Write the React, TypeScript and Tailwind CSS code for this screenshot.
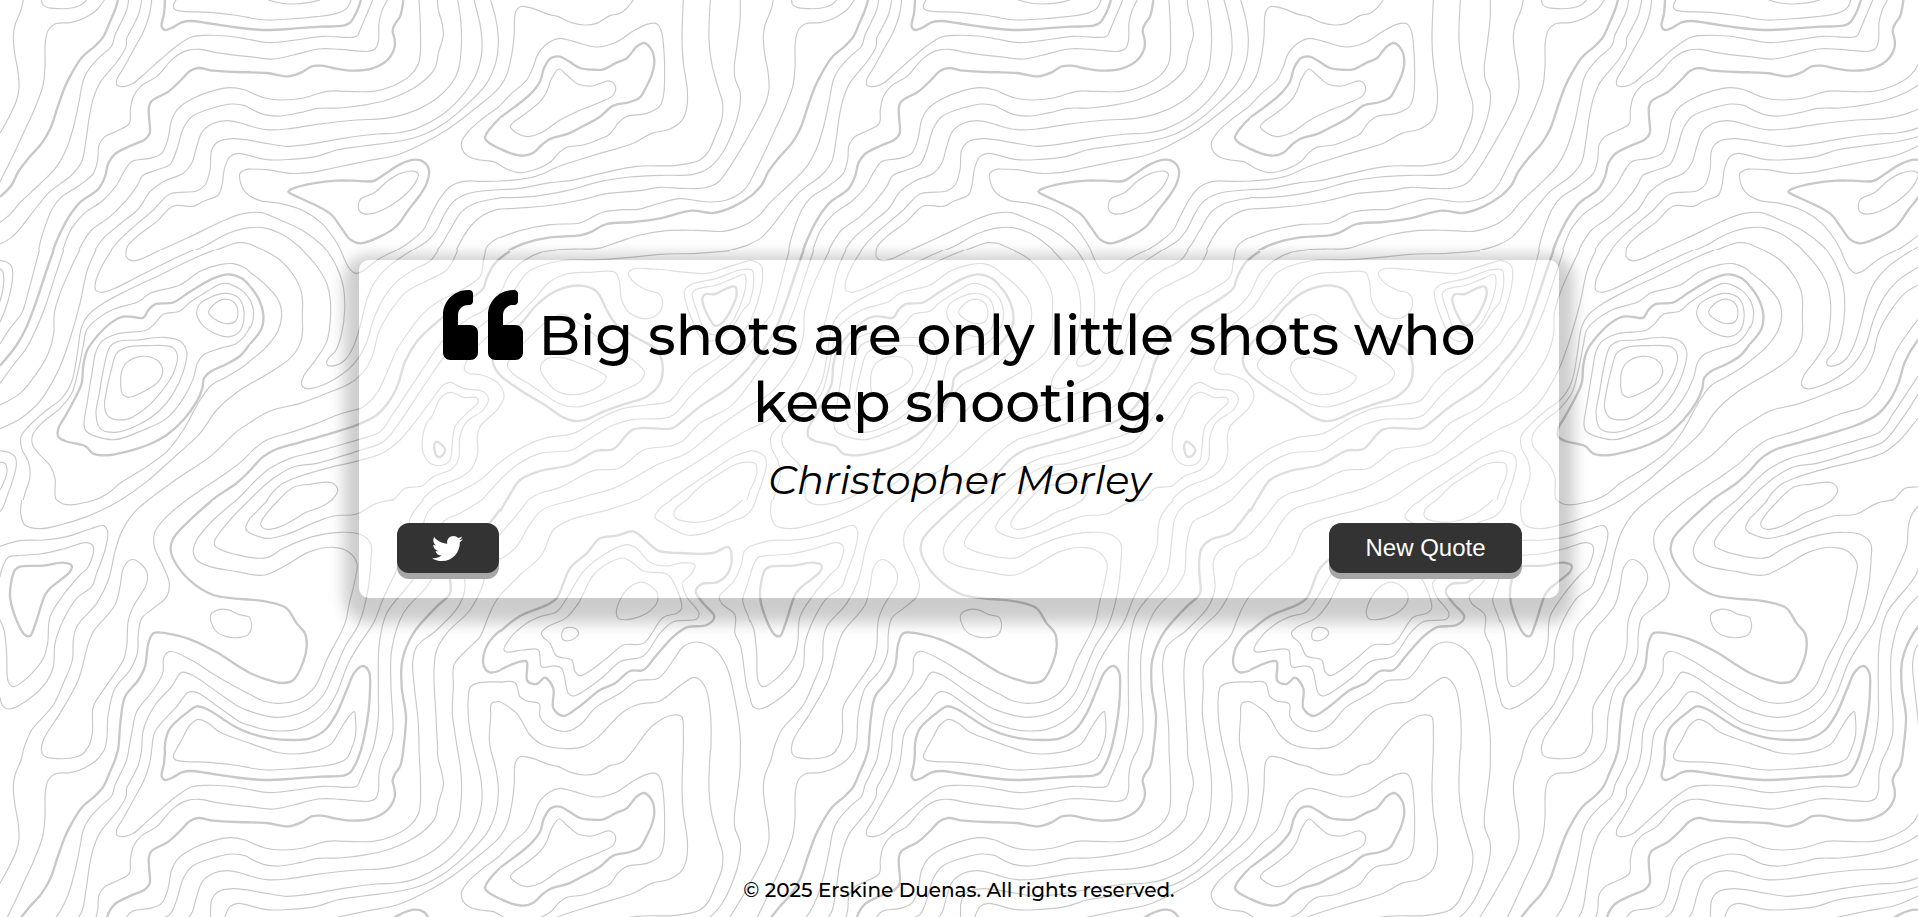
import React from "react";
import { FaQuoteLeft, FaTwitter } from "react-icons/fa";

type Cell = { x: number; y: number; w?: number; thin: string[]; thick: string[] };

// Contour lines of the repeating 750px tile. Points are in thirds of a pixel,
// relative to the cell's corner; a trailing "z" closes the contour.
const CELLS: Cell[] = [
  {
    x: 0, y: 0,
    thin: [
      "70,0 63,30 45,75 40,110 44,160 54,215 57,265 50,300 30,345 0,400",
      "125,0 127,12 140,22 175,26 215,24 243,15 260,0",
      "313,0 290,30 255,53 215,67 165,72 145,90 136,125 135,200 128,260 100,335 70,400 40,465 0,545",
      "386,0 380,30 362,70 345,105 335,138 300,170 265,210 250,240 238,300 222,375 200,445 170,500 120,552 60,608 30,643 0,667",
      "425,0 415,45 390,95 380,115 378,140 355,180 300,248 280,295 268,350 258,420 245,485 215,525 150,575 115,615 65,680 35,712 0,732",
      "455,0 448,45 430,95 400,150 370,205 350,240 352,257 375,259 400,250 435,220 480,180 530,138 575,111 620,106 680,108 730,115 750,119 780,125",
      "780,173 750,170 710,166 650,158 600,148 560,152 520,175 470,230 425,257 400,290 391,330 388,370 350,393 315,410 297,435 293,480 280,520 240,555 180,595 155,630 135,680 120,730 112,780",
      "528,0 520,20 527,30 550,34 630,37 700,45 750,53 780,58",
      "780,288 750,276 735,270 690,263 640,272 580,295 535,325 515,360 503,420 485,460 450,475 395,485 372,515 350,555 310,600 250,643 215,685 195,730 180,780",
      "780,341 750,325 735,317 695,312 645,322 575,350 550,385 530,450 510,493 470,510 428,527 410,560 375,605 330,650 275,690 250,725 222,780",
      "780,386 750,378 725,370 680,362 640,370 607,395 590,440 575,490 550,520 490,545 450,575 415,627 360,672 310,715 285,750 270,780",
      "780,426 750,421 735,419 700,416 655,425 635,450 630,510 615,555 590,573 510,582 460,630 390,690 345,735 315,780",
      "780,476 750,467 715,460 690,470 675,500 665,560 655,585 610,604 580,619 520,618 470,665 410,710 382,740 378,762 388,780",
      "780,507 740,508 720,520 722,550 735,575 750,588 780,600",
      "780,637 750,638 720,643 670,662 560,715 460,760 415,780",
      "780,682 750,683 730,686 680,702 610,740 510,780",
      "780,744 750,732 715,728 670,742 575,780",
    ],
    thick: [
      "354,0 345,30 328,70 310,110 285,138 245,173 215,220 195,260 175,315 150,388 125,430 85,475 55,515 35,555 0,591",
      "495,0 492,40 485,80 495,90 515,84 545,67 575,63 620,69 700,81 750,87 780,90",
      "780,217 710,216 640,212 595,204 570,213 540,243 505,275 455,303 447,320 447,350 449,400 435,418 390,438 345,462 325,490 315,530 295,567 240,607 210,645 185,690 165,735 150,780",
    ],
  },
  {
    x: 250, y: 0,
    thin: [
      "55,0 90,9 130,12 175,8 210,0",
      "0,54 50,60 120,57 200,50 260,40 290,25 303,0",
      "0,119 60,128 130,121 220,109 320,109 330,90 345,55 358,25 368,0",
      "0,170 70,177 130,165 205,147 270,148 355,154 375,147 385,125 387,70 395,35 412,0",
      "0,276 45,294 95,300 160,294 230,274 290,274 370,274 430,257 480,227 505,192 511,160 511,80 507,0",
      "0,325 40,343 90,348 150,338 205,325 270,324 350,314 420,297 490,265 540,225 557,200 565,160 580,105 575,65 565,30 562,0",
      "0,378 50,389 110,387 200,373 320,360 400,356 470,341 550,302 605,250 625,210 634,140 633,70 623,0",
      "0,421 60,432 110,439 170,434 280,415 380,402 440,399 500,385 570,349 630,295 675,230 695,160 693,90 672,0",
      "0,467 50,479 120,478 200,469 260,450 340,438 450,423 520,404 590,365 660,305 710,250 738,185 745,120 738,60 722,0",
      "0,507 50,509 120,520 185,517 250,504 350,483 440,465 510,435 590,390 670,330 750,260 772,215 780,175",
      "325,615 332,597 350,588 375,577 410,545 450,521 495,514 505,522 495,550 465,585 420,618 370,640 340,641 328,632 z",
      "0,588 30,602 90,610 160,632 215,670 255,720 287,780",
      "0,638 35,638 90,660 160,693 215,735 252,780",
      "0,683 40,683 90,700 145,738 187,780",
      "0,732 45,753 90,780",
      "780,288 750,317 690,362 650,400 634,430 640,455 660,472 690,480 730,485 750,495 780,510",
      "780,542 700,544 640,544 600,560 570,595 540,650 520,690 480,725 430,757 380,780",
      "780,569 720,571 650,582 610,605 585,640 560,690 535,720 490,750 440,780",
      "780,592 730,597 670,612 635,635 600,690 570,740 530,780",
      "780,626 740,629 700,645 665,675 640,710 605,780",
      "780,703 740,716 715,735 703,760 702,780",
    ],
    thick: [
      "0,87 50,90 130,86 210,80 280,77 300,68 318,40 333,0",
      "0,217 50,219 115,229 155,217 185,199 215,197 260,206 310,212 365,206 410,182 433,145 434,120 428,90 435,72 450,50 460,0",
      "115,575 130,565 190,550 260,542 310,542 370,543 405,522 450,493 495,479 520,485 537,510 530,550 510,585 475,630 440,678 390,710 330,730 300,718 275,685 245,645 200,617 145,592 z",
      "780,330 750,354 730,374 710,400 705,415 715,427 745,444 780,458",
      "780,754 760,766 745,780",
    ],
  },
  {
    x: 500, y: 0,
    thin: [
      "0,260 20,225 35,165 42,110 47,35 60,20 90,23 145,43 175,50 215,68 255,75 290,70 330,47 360,40 380,25 400,0",
      "0,317 35,280 80,240 100,200 115,160 150,125 180,115 220,124 290,141 350,126 400,93 440,73 470,71 483,90 490,130 494,220 490,290 478,320 440,340 378,350 355,368 330,402 300,417 250,435 200,442 175,460 150,487 110,507 60,518 20,507 0,495",
      "31,380 40,367 75,342 120,305 140,275 155,235 177,207 200,225 235,253 275,258 330,243 346,258 340,285 300,307 230,335 180,360 120,400 80,410 50,399 z",
      "0,543 60,538 110,528 180,498 290,463 400,430 455,400 510,387 545,362 560,325 562,270 550,190 546,120 550,0",
      "0,569 60,565 150,548 210,542 300,521 410,499 530,496 600,480 625,455 645,410 665,360 668,310 655,265 635,190 627,120 631,0",
      "0,593 100,589 200,572 300,545 390,531 480,526 580,523 625,505 665,462 700,390 720,315 720,275 705,235 703,200 712,130 720,60 721,0",
      "0,627 80,623 180,612 250,598 320,581 420,572 480,562 550,565 610,564 650,550 680,515 720,452 750,400 780,340",
      "0,713 60,692 150,674 240,669 270,655 310,636 370,629 415,628 470,612 540,596 590,602 630,606 680,600 722,579 750,546 780,487",
      "75,780 110,762 170,750 240,747 290,746 360,724 420,705 500,692 590,691 670,694 715,683 750,667 780,647",
      "430,768 480,763 580,761 680,753 730,740 750,732 780,712",
    ],
    thick: [
      "0,353 45,320 90,283 120,245 132,205 152,175 180,170 205,183 240,204 275,209 310,208 350,188 380,175 410,140 432,129 455,150 463,185 455,225 440,258 420,292 390,306 340,317 300,350 250,378 205,401 150,417 125,435 100,458 70,467 35,461 0,446",
      "0,776 30,750 80,728 150,712 240,706 270,697 320,672 400,666 480,655 575,632 640,639 700,620 750,590 780,562",
    ],
  },
  {
    x: 0, y: 250,
    thin: [
      "0,31 20,36 35,50 38,80 30,130 15,180 0,217",
      "0,57 8,63 11,80 10,110 0,155",
      "118,0 105,50 85,125 65,190 30,235 0,282",
      "191,0 165,80 130,185 80,293 40,345 0,400",
      "239,0 210,60 180,130 163,190 161,250 145,310 110,370 60,430 0,465",
      "288,0 262,60 240,160 215,250 180,350 140,425 110,465 60,507 0,536",
      "335,0 305,50 287,95 287,120 305,127 340,117 410,82 520,27 580,0",
      "379,0 379,20 395,32 420,28 480,0",
      "643,0 600,17 540,45 480,75 380,122 310,160 265,195 245,230 232,310 215,395 185,445 140,480 85,530 63,560 65,595 85,635 90,680 75,730 62,780",
      "780,92 750,66 735,54 700,41 660,44 600,64 540,105 450,130 415,155 340,178 290,208 260,240 250,285 235,360 215,430 180,475 125,520 98,555 98,585 120,615 150,647 165,685 167,745 185,762 220,764 270,755 320,733 360,700 440,650 500,605 550,540 600,450 635,405 680,380 720,356 750,334 780,311",
      "252,525 262,455 275,375 288,305 305,275 350,252 440,240 465,220 490,193 540,183 570,157 620,125 670,100 720,117 750,150 760,190 745,240 710,280 660,295 610,315 592,340 580,385 550,445 500,505 430,540 345,569 290,560 258,543 z",
      "288,490 298,430 310,360 330,290 355,274 410,270 490,262 540,273 560,305 550,365 520,430 480,480 420,522 345,547 300,535 z",
      "314,475 320,420 335,355 350,310 380,292 440,287 515,291 532,315 520,370 480,430 430,480 380,508 330,503 z",
      "362,400 365,365 380,338 425,319 470,330 488,360 475,395 430,425 385,442 367,432 z",
      "590,190 597,165 625,145 675,130 715,143 732,185 722,240 690,260 640,248 605,222 z",
      "626,187 640,165 670,148 700,155 713,180 707,213 680,221 645,208 z",
      "780,382 750,402 715,424 650,480 600,550 530,615 440,695 362,750 305,780",
      "780,500 750,518 710,545 630,620 540,680 445,750 412,780",
      "780,586 750,610 720,638 680,668 600,722 560,750 523,780",
      "780,680 750,709 710,750 670,785",
      "780,718 748,750 718,780",
      "0,602 25,607 45,620 49,645 35,700 5,780",
      "0,637 15,640 21,665 10,700 0,720",
    ],
    thick: [
      "161,0 135,75 105,165 80,230 50,285 0,347",
      "780,155 750,109 725,85 685,73 640,85 570,125 520,157 465,163 445,180 430,203 400,201 370,200 335,217 290,260 262,300 250,345 245,400 225,445 195,500 175,535 175,560 195,573 255,588 280,611 320,616 380,605 450,582 500,555 550,510 590,455 607,415 612,385 630,366 680,342 720,318 750,282 780,247",
      "780,632 750,662 710,699 650,740 637,750 600,775",
    ],
  },
  {
    x: 250, y: 250, w: 1500,
    thin: [
      "0,148 10,180 8,215 0,235",
      "0,67 45,103 85,150 95,195 85,240 50,290 0,333",
      "40,0 90,30 130,75 155,130 157,200 155,265 130,315 80,355 0,402",
      "157,0 200,48 230,100 241,150 240,220 230,275 200,325 160,380 155,405 170,416 210,408 265,380 310,343 345,290 372,205 400,145 440,95 490,60 540,33 565,0",
      "272,0 300,58 318,70 335,65 390,25 440,0",
      "230,0 260,50 280,110 284,180 275,250 258,300 232,330 232,345 255,347 285,330 310,290 330,230 350,150 375,95 415,50 487,0",
      "0,518 60,483 150,460 230,430 300,400 345,360 370,310 385,250 420,185 470,125 540,88 590,60 610,30 623,0",
      "0,608 50,570 130,545 200,520 270,492 340,470 380,430 410,370 440,300 480,240 520,190 564,155 634,120 690,80 700,35 707,0",
      "0,708 60,655 120,625 200,605 270,585 327,568 390,545 430,490 510,370 580,270 650,210 710,175 750,130 780,70 825,30 870,8 920,0",
      "0,748 70,685 130,651 200,640 270,620 327,602 400,575 450,515 520,410 600,300 690,230 760,170 800,110 835,65 930,33 1050,29 1140,22 1230,13 1340,10 1440,2",
      "30,780 70,725 95,702 140,682 230,655 327,632 400,608 450,570 500,510 545,450 580,405 600,397 640,415 700,425 715,445 700,480 650,515 630,560 625,630 605,657 550,680 515,708 465,715 430,748 385,755 327,780",
      "60,780 130,712 180,703 245,698 263,718 250,745 215,768 185,780",
      "545,500 575,440 605,427 640,442 680,443 685,455 650,490 615,530 607,580 600,630 580,645 545,642 520,610 518,560 530,520 z",
      "495,780 525,740 560,712 635,680 665,655 683,610 682,560 690,530 745,475 762,440 745,400 695,375 655,370 643,358 655,325 710,262 790,210 850,150 900,95 950,72 1020,67 1095,67 1108,95 1115,150 1140,190 1190,206 1225,190 1238,155 1225,130 1190,120 1150,95 1135,70 1150,57 1210,57 1310,67 1370,70 1430,52 1500,31",
      "772,345 790,315 850,250 900,207 940,193 985,220 1050,265 1120,310 1183,365 1170,395 1110,425 1040,455 980,471 930,462 850,410 790,372 z",
      "871,355 885,330 930,322 990,340 1068,380 1060,398 1010,427 960,434 915,420 885,385 z",
      "1512,80 1505,60 1470,60 1400,85 1320,105 1303,125 1310,165 1335,230 1355,265 1379,274 1410,262 1450,225 1480,180 1500,155 z",
      "1327,130 1340,118 1400,105 1450,85 1483,73 1488,90 1480,140 1455,200 1425,240 1395,255 1365,240 1340,180 z",
      "1500,217 1465,262 1400,325 1330,370 1295,410 1260,452 1190,465 1120,475 1050,505 970,550 890,563 820,590 750,637 690,690 620,730 578,750 540,780",
      "1500,282 1450,330 1380,385 1320,440 1270,495 1240,505 1150,508 1090,525 1020,565 965,600 870,610 800,645 750,690 697,748 660,785",
      "1500,400 1440,470 1350,520 1295,575 1260,588 1180,600 1130,640 1100,657 1030,662 930,712 870,730 835,750 810,780",
      "1500,465 1420,520 1350,580 1310,610 1220,645 1150,685 1090,715 1020,735 970,750 880,780",
      "1530,525 1500,536 1450,565 1350,630 1250,692 1163,750 1075,780",
      "1530,603 1510,602 1450,620 1390,660 1310,715 1262,750 1225,780",
      "1275,780 1310,750 1350,710 1410,670 1460,642 1500,637 1520,645",
      "1518,680 1500,720 1485,780",
    ],
    thick: [
      "0,109 25,145 40,195 35,235 0,282",
      "0,662 40,620 80,597 150,577 240,551 320,525 380,495 420,450 445,400 465,335 500,275 545,230 600,185 655,150 700,115 710,85 735,40 780,3",
      "553,585 560,575 586,600 572,620 560,618 554,603 z",
      "728,330 750,285 810,225 860,165 920,122 995,107 1040,125 1070,180 1100,225 1150,258 1220,300 1237,340 1230,400 1190,440 1130,460 1060,485 1010,508 975,513 940,502 880,462 810,420 745,370 z",
      "1357,145 1365,133 1395,132 1430,115 1455,110 1460,130 1445,175 1415,220 1395,227 1375,200 1360,165 z",
      "1504,345 1440,410 1350,470 1295,515 1265,535 1150,538 1090,597 1040,602 960,645 870,663 810,690 770,750 735,795",
    ],
  },
  {
    x: 0, y: 500,
    thin: [
      "18,0 10,20 0,35",
      "65,0 62,40 75,75 120,86 180,75 260,50 330,18 362,0",
      "170,0 190,12 220,14 285,0",
      "0,139 60,122 130,120 200,110 270,87 310,77 323,95 315,150 290,220 275,260 230,295 190,360 165,430 160,500 140,545 90,595 30,627 10,620 0,592",
      "0,230 8,200 25,172 50,167 120,162 190,147 260,128 280,140 265,200 240,225 190,285 150,350 143,430 130,475 80,535 40,560 25,545 20,460 12,390 0,360",
      "445,0 400,40 365,95 345,155 325,240 290,310 230,380 220,420 217,480 190,550 160,615 95,690 75,735 62,780",
      "345,315 360,260 370,205 390,180 410,182 440,215 440,250 400,320 385,360 380,440 370,480 310,570 280,620 277,700 265,740 235,765 190,775 140,773 125,755 130,720 180,640 235,540 265,430 280,395 z",
      "560,0 500,50 465,95 463,140 490,200 508,250 500,290 460,325 425,355 415,400 412,460 390,510 345,565 325,640 320,720 313,750 290,780",
      "710,0 640,60 590,120 580,155 590,180 630,200 710,215 750,223 780,227",
      "748,0 690,60 645,120 645,137 670,152 720,166 750,172 780,175",
      "780,25 750,55 737,85 750,100 780,113",
      "632,345 660,328 690,331 715,343 748,352 754,375 745,403 720,412 680,410 645,390 z",
      "780,600 750,583 720,568 640,522 570,478 510,454 492,470 488,520 460,570 410,635 395,700 386,750 380,780",
      "780,646 750,634 720,622 650,575 580,527 545,517 515,560 465,615 430,690 425,750 420,780",
      "780,686 750,676 725,668 650,617 590,577 565,577 530,620 465,695 455,750 450,780",
      "780,741 750,730 660,697 625,670 595,658 570,675 545,720 528,750 520,780",
    ],
    thick: [
      "45,210 60,200 130,197 190,188 215,197 210,215 150,265 135,285 105,375 90,408 75,405 40,335 30,290 35,240 z",
      "637,0 570,60 520,115 512,150 530,195 580,250 640,285 700,295 750,299 780,302",
      "780,532 750,519 720,502 650,457 570,418 500,400 460,400 445,430 435,500 415,540 375,590 362,660 356,735 352,760 345,790",
      "780,710 750,700 700,677 620,627 590,619 565,635 510,685 497,720 494,750 493,780",
    ],
  },
  {
    x: 250, y: 500,
    thin: [
      "53,0 20,35 0,55",
      "87,0 50,40 32,72 45,87 85,82 130,60 165,38 210,22 247,0",
      "0,99 50,115 110,103 200,65 250,48 320,42 380,10 432,0",
      "0,172 50,173 100,145 180,112 270,97 330,103 362,130 363,180 352,280 325,375 285,440 255,510 220,585 170,630 80,652 0,634",
      "0,223 45,225 100,200 180,155 250,142 295,155 321,190 315,240 298,310 285,370 230,480 195,560 150,597 85,610 40,603 0,583",
      "520,0 485,45 475,80 470,140 440,210 400,295 370,370 330,430 295,490 260,580 230,630 190,665 140,688 85,693 40,688 0,676",
      "0,730 60,750 130,762 200,752 245,730 270,690 300,645 313,635 316,650 316,710 303,750 285,780",
      "578,0 545,22 525,55 515,120 500,220 410,340 388,430 385,580 385,650 368,750 355,780",
      "695,0 630,40 580,65 560,130 553,220 530,260 460,340 425,450 423,560 428,700 412,750 400,780",
      "780,70 740,110 660,150 640,185 645,265 625,320 560,390 500,440 488,490 493,560 505,670 507,780",
      "780,155 730,190 710,215 695,265 660,330 590,400 560,450 552,510 558,650 565,780",
      "780,255 740,300 715,350 690,410 650,450 612,495 610,560 607,640 615,700 627,780",
      "780,415 762,440 765,455 780,457",
      "780,547 690,548 662,560 655,590 658,680 672,750 680,780",
      "780,615 750,605 725,610 722,650 718,720 722,750 727,780",
      "0,355 5,375 0,398",
    ],
    thick: [
      "0,700 60,715 130,720 180,715 225,690 260,640 290,570 315,515 340,498 357,515 360,570 352,660 333,750 322,785",
      "770,0 720,68 690,100 630,120 605,145 598,180 598,220 600,280 560,320 490,400 457,480 455,560 468,650 462,730 455,780",
      "780,370 730,410 705,450 702,500 720,517 780,500",
      "0,299 60,307 110,325 140,370 165,400 170,440 160,485 130,540 95,549 40,535 0,519",
    ],
  },
  {
    x: 500, y: 500,
    thin: [
      "85,0 50,45 0,103",
      "225,0 130,28 95,65 45,145 0,178",
      "413,0 330,28 210,60 160,90 125,165 60,225 0,286",
      "12,450 30,415 80,370 120,350 170,335 200,295 250,215 310,165 380,134 410,145 450,187 500,198 550,188 585,195 575,220 548,250 560,290 597,340 590,357 520,365 480,400 430,468 360,485 310,530 220,588 205,580 185,505 165,498 125,500 115,450 70,450 20,456 z",
      "124,400 140,382 200,352 235,310 280,225 330,187 370,174 400,190 430,213 500,222 520,245 545,325 530,340 490,352 430,430 370,435 320,475 240,527 225,515 215,480 170,468 150,430 130,412 z",
      "349,340 360,300 390,260 430,247 470,275 472,305 440,340 380,359 355,355 z",
      "185,405 195,385 225,385 236,400 215,420 190,420 z",
      "515,0 480,25 465,52 490,70 560,105 620,98 680,70 740,45 765,10 768,0",
      "560,0 525,30 525,52 560,65 620,63 680,38 728,0",
      "780,125 750,138 732,155 725,190 700,245 658,290 665,310 705,345 705,400 722,440 740,560 750,592 765,625 780,628",
      "780,173 757,210 740,260 728,300 745,350 765,420 772,540 780,557",
      "0,547 45,548 60,590 80,603 118,612 120,650 150,682 200,694 240,675 290,620 360,580 410,543 475,535 520,480 550,440 590,426 640,445 680,500 705,600 720,700 721,780",
      "0,605 50,640 90,705 130,735 200,746 250,740 290,715 370,635 420,612 480,603 540,557 585,532 615,560 632,650 631,780",
      "375,780 400,750 460,675 520,645 545,650 550,700 549,780",
    ],
    thick: [
      "20,0 0,35",
      "0,395 60,348 140,315 170,295 210,205 260,160 300,115 350,107 400,94 430,115 475,152 540,159 640,159 685,141 695,180 680,225 650,247 605,252 587,275 610,310 643,350 620,375 560,382 520,410 470,465 430,510 390,513 345,550 300,570 240,618 190,648 160,625 160,565 135,533 110,552 82,543 80,485 60,485 0,510",
    ],
  },
];

// Catmull-Rom spline through the points, written as cubic Béziers.
function curve(spec: string): string {
  const closed = spec.endsWith("z");
  const p = spec.replace(" z", "").split(" ").map((s) => s.split(",").map(Number));
  const n = p.length;
  const at = (i: number) => (closed ? p[(i + n) % n] : p[Math.max(0, Math.min(n - 1, i))]);
  const knot = (a: number[], b: number[]) => Math.sqrt(Math.hypot(a[0] - b[0], a[1] - b[1])) || 0.001;
  let d = `M${p[0][0]} ${p[0][1]}`;
  for (let i = 0; i < (closed ? n : n - 1); i++) {
    const a = at(i - 1), b = at(i), c = at(i + 1), e = at(i + 2);
    const d1 = knot(a, b), d2 = knot(b, c), d3 = knot(c, e);
    const c1 = [0, 1].map((k) => a === b ? b[k] : (d1 * d1 * c[k] - d2 * d2 * a[k] + (2 * d1 * d1 + 3 * d1 * d2 + d2 * d2) * b[k]) / (3 * d1 * (d1 + d2)));
    const c2 = [0, 1].map((k) => c === e ? c[k] : (d3 * d3 * b[k] - d2 * d2 * e[k] + (2 * d3 * d3 + 3 * d3 * d2 + d2 * d2) * c[k]) / (3 * d3 * (d3 + d2)));
    d += `C${c1[0].toFixed(1)} ${c1[1].toFixed(1)} ${c2[0].toFixed(1)} ${c2[1].toFixed(1)} ${c[0]} ${c[1]}`;
  }
  return closed ? d + "Z" : d;
}

function Topography() {
  return (
    <svg className="absolute inset-0 h-full w-full" aria-hidden="true">
      <defs>
        <clipPath id="cell"><rect width="750" height="750" /></clipPath>
        <clipPath id="wide"><rect width="1500" height="750" /></clipPath>
        <pattern id="topo" width="750" height="750" patternUnits="userSpaceOnUse">
          {CELLS.map((c, i) => (
            <g key={i} transform={`translate(${c.x} ${c.y}) scale(0.333333)`} clipPath={c.w ? "url(#wide)" : "url(#cell)"} fill="none" stroke="#c8c8c8" strokeLinejoin="round">
              <path d={c.thin.map(curve).join("")} strokeWidth="3.5" />
              <path d={c.thick.map(curve).join("")} strokeWidth="7" />
            </g>
          ))}
        </pattern>
      </defs>
      <rect width="100%" height="100%" fill="url(#topo)" />
    </svg>
  );
}

export default function App() {
  return (
    <div className="relative flex h-[917px] w-full flex-col items-center overflow-hidden bg-white font-['Montserrat',sans-serif] text-black">
      <Topography />
      <main className="relative mt-[260px] flex h-[338px] w-[1200px] flex-col rounded-[10px] bg-white/40 pt-[30px] pr-[37px] pl-[38px] shadow-[0_10px_15px_15px_rgba(0,0,0,0.2)]">
        <h1 className="text-[55px] font-medium leading-[67px]">
          <span className="flex h-[79px] items-start justify-center">
            <FaQuoteLeft className="mr-[15px] mt-[-5px] size-[80px] shrink-0" />
            <span className="mt-[12px] whitespace-nowrap">Big shots are only little shots who</span>
          </span>
          <span className="block h-[67px] text-center">keep shooting.</span>
        </h1>
        <p className="mt-5 text-center text-[40px] italic leading-[48px]">Christopher Morley</p>
        <div className="mt-[19px] flex justify-between">
          <button className="flex h-[50px] w-[102px] items-center justify-center rounded-[12px] bg-[#333] text-white shadow-[0_6px_0_#a6a6a6]">
            <FaTwitter className="mr-px size-[31px]" />
          </button>
          <button className="h-[50px] w-[193px] rounded-[12px] bg-[#333] font-['Liberation_Sans',sans-serif] text-[24px] leading-none text-white shadow-[0_6px_0_#a6a6a6]">
            New Quote
          </button>
        </div>
      </main>
      <footer className="relative mt-auto mb-[15px] text-[20px] font-medium leading-[24px]">© 2025 Erskine Duenas. All rights reserved.</footer>
    </div>
  );
}
